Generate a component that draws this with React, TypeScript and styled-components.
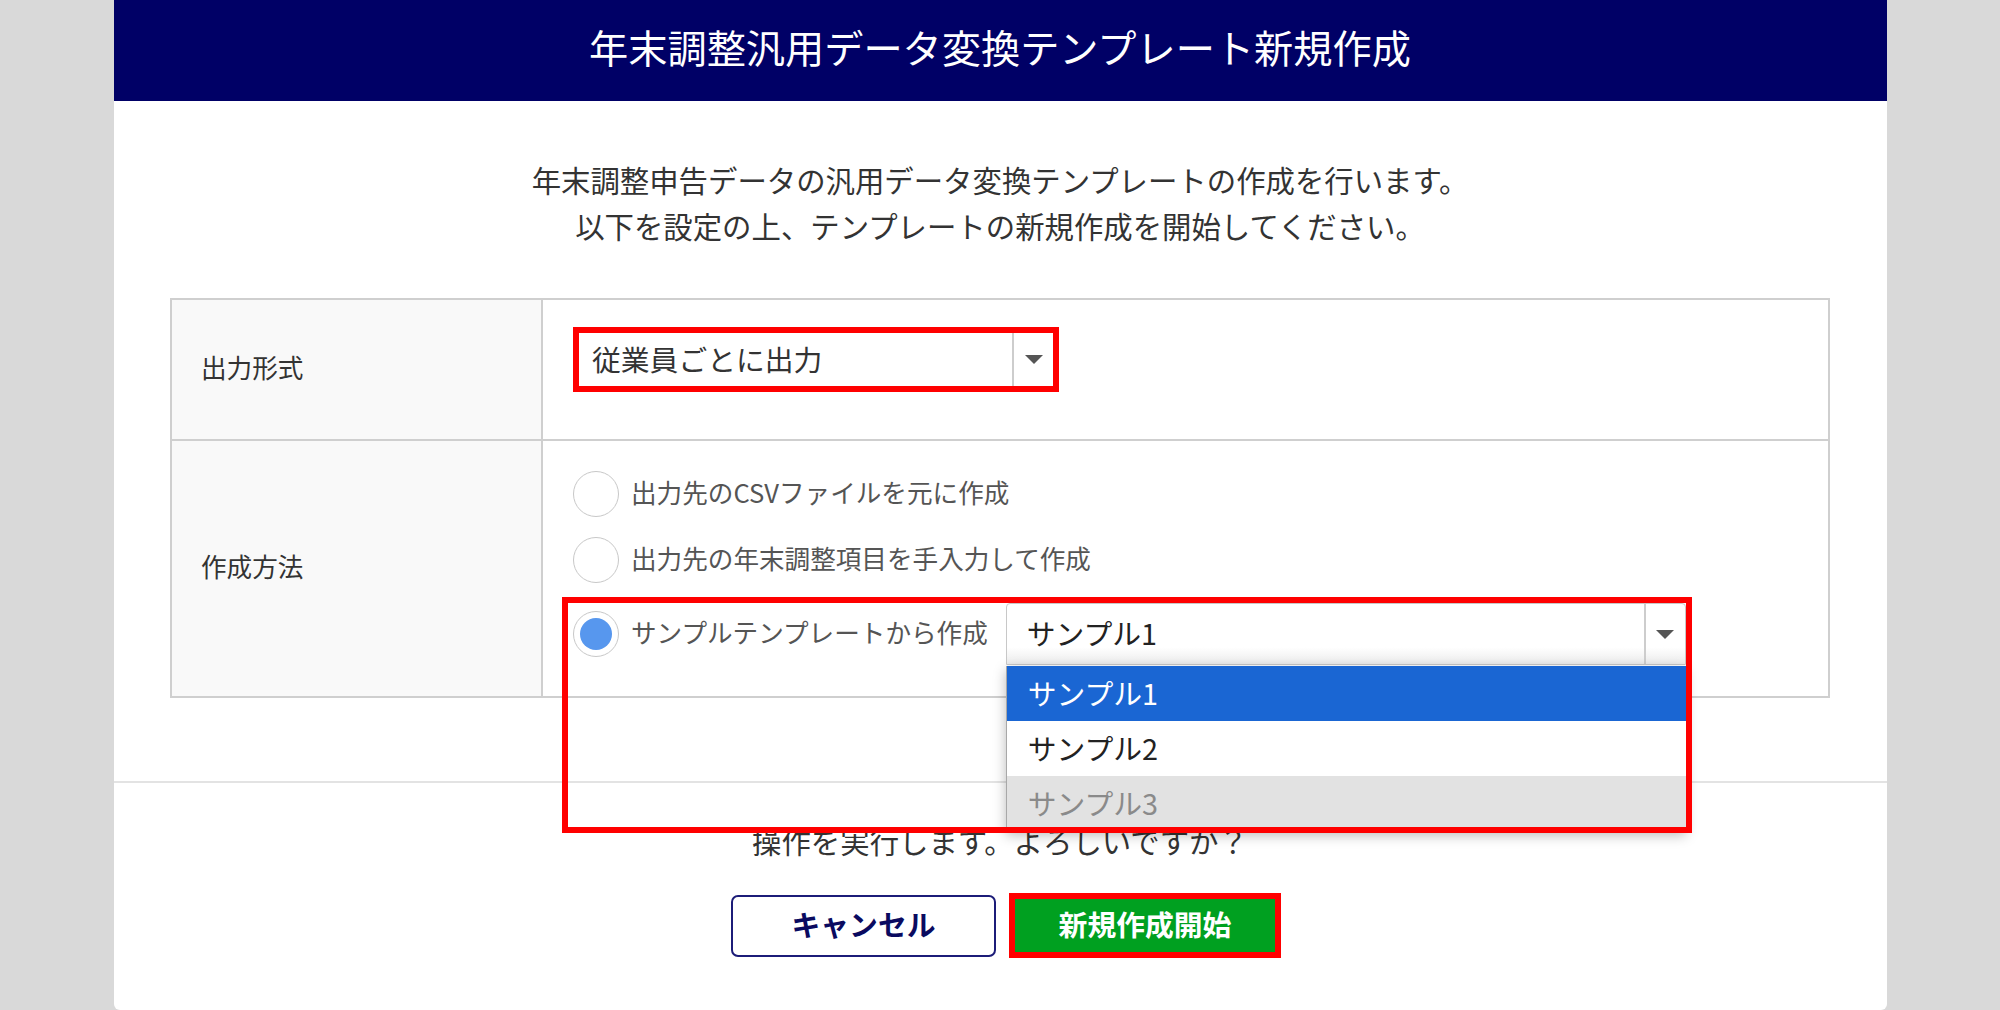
import React from "react";
import styled, { createGlobalStyle } from "styled-components";

const GlobalStyle = createGlobalStyle`
  html, body {
    margin: 0;
    padding: 0;
    background: #d9d9d9;
  }
  body {
    font-family: "Noto Sans CJK JP", "Noto Sans", "Liberation Sans", sans-serif;
    color: #333;
  }
  * { box-sizing: border-box; }
`;

const Page = styled.div`
  display: flex;
  justify-content: center;
  min-height: 1010px;
`;

const Panel = styled.div`
  width: 1773px;
  background: #fff;
  border-radius: 0 0 6px 6px;
  display: flex;
  flex-direction: column;
`;

const Header = styled.header`
  height: 101px;
  background: #000066;
  color: #fff;
  display: flex;
  align-items: center;
  justify-content: center;
  padding-bottom: 8px;
  font-size: 39.2px;
  line-height: 1.2;
`;

const Lead = styled.div`
  padding-top: 55px;
  text-align: center;
  font-size: 29.4px;
  line-height: 46px;
  color: #333;
`;

const Table = styled.div`
  margin: 50px 56.5px 0;
  border: 2px solid #cfcfcf;
  border-bottom: none;
`;

const Row = styled.div`
  display: grid;
  grid-template-columns: 371px 1fr;
  border-bottom: 2px solid #cfcfcf;
`;

const LabelCell = styled.div`
  background: #f9f9f9;
  border-right: 2px solid #cfcfcf;
  display: flex;
  align-items: center;
  padding: 0 0 6px 29px;
  font-size: 25.6px;
  color: #333;
`;

const ValueCell = styled.div<{ $pad: string }>`
  padding: ${(p) => p.$pad};
  display: flex;
  flex-direction: column;
  align-items: flex-start;
  gap: 20px;
`;

const SelectBox = styled.div<{ $variant: "framed" | "plain" }>`
  position: relative;
  display: flex;
  align-items: stretch;
  background: ${(p) =>
    p.$variant === "plain" ? "linear-gradient(#ffffff 72%, #ececec)" : "#fff"};
  border: ${(p) => (p.$variant === "framed" ? "6px solid #ff0000" : "1px solid #c8c8c8")};
  border-radius: ${(p) => (p.$variant === "plain" ? "4px 4px 0 0" : "0")};
  width: ${(p) => (p.$variant === "framed" ? "486px" : "680px")};
  height: ${(p) => (p.$variant === "framed" ? "65px" : "62px")};
  font-size: 28.8px;
  color: ${(p) => (p.$variant === "framed" ? "#333" : "#222")};
`;

const SelectValue = styled.div<{ $pad: number }>`
  flex: 1;
  display: flex;
  align-items: center;
  padding-left: ${(p) => p.$pad}px;
  padding-bottom: 3px;
  white-space: nowrap;
`;

const ArrowZone = styled.div`
  width: 41px;
  border-left: 2px solid #cdcdcd;
  display: flex;
  align-items: center;
  justify-content: center;
`;

const Arrow = styled.span`
  width: 0;
  height: 0;
  border-left: 9.5px solid transparent;
  border-right: 9.5px solid transparent;
  border-top: 9.5px solid #555;
`;

const RadioItem = styled.label`
  position: relative;
  display: flex;
  align-items: center;
  gap: 12px;
  font-size: 25.6px;
  color: #555;
  white-space: nowrap;
`;

const RadioText = styled.span`
  padding-bottom: 5px;
`;

const RadioCircle = styled.span<{ $checked?: boolean }>`
  width: 46px;
  height: 46px;
  border-radius: 50%;
  border: 1.5px solid #c8c8c8;
  background: #fff;
  display: flex;
  align-items: center;
  justify-content: center;
  flex: none;
  &::after {
    content: "";
    width: 32px;
    height: 32px;
    border-radius: 50%;
    background: ${(p) => (p.$checked ? "#5797ee" : "transparent")};
  }
`;

const InlineSelect = styled.div`
  position: relative;
  margin-left: 6px;
`;

const OptionList = styled.ul`
  position: absolute;
  top: 100%;
  left: 0;
  width: 680px;
  margin: 1px 0 0;
  padding: 0;
  list-style: none;
  border-left: 1px solid #a8a8a8;
  box-shadow: 0 4px 12px rgba(0, 0, 0, 0.28);
  z-index: 2;
`;

const Option = styled.li<{ $state: "active" | "normal" | "disabled" }>`
  height: 55px;
  display: flex;
  align-items: center;
  padding: 0 0 3px 21px;
  font-size: 28.8px;
  background: ${(p) =>
    p.$state === "active" ? "#1a66d3" : p.$state === "disabled" ? "#e2e2e2" : "#fff"};
  color: ${(p) =>
    p.$state === "active" ? "#fff" : p.$state === "disabled" ? "#8a8a8a" : "#222"};
`;

const RedFrame = styled.div`
  position: absolute;
  left: -11px;
  top: -6px;
  width: 1130px;
  height: 236px;
  border: 6px solid #ff0000;
  pointer-events: none;
  z-index: 3;
`;

const Footer = styled.div`
  margin-top: 82.5px;
  border-top: 2px solid #e3e3e3;
  padding: 34px 0 50px;
  display: flex;
  flex-direction: column;
  align-items: center;
`;

const Confirm = styled.p`
  margin: 0;
  font-size: 29.4px;
  line-height: 46px;
  color: #333;
`;

const ButtonRow = styled.div`
  margin-top: 30.5px;
  padding-left: 12px;
  display: flex;
  align-items: center;
  gap: 13px;
`;

const Button = styled.button<{ $kind: "cancel" | "primary" }>`
  font-family: inherit;
  font-weight: 700;
  font-size: 28.8px;
  cursor: pointer;
  display: flex;
  align-items: center;
  justify-content: center;
  padding: 0 0 4px;
  width: ${(p) => (p.$kind === "cancel" ? "265px" : "272px")};
  height: ${(p) => (p.$kind === "cancel" ? "62px" : "65px")};
  border-radius: ${(p) => (p.$kind === "cancel" ? "7px" : "0")};
  border: ${(p) => (p.$kind === "cancel" ? "2px solid #1c1c78" : "6px solid #ff0000")};
  background: ${(p) => (p.$kind === "cancel" ? "#fff" : "#00a020")};
  color: ${(p) => (p.$kind === "cancel" ? "#0a0a60" : "#fff")};
`;

export default function App() {
  return (
    <>
      <GlobalStyle />
      <Page>
        <Panel>
          <Header>年末調整汎用データ変換テンプレート新規作成</Header>
          <Lead>
            年末調整申告データの汎用データ変換テンプレートの作成を行います。
            <br />
            以下を設定の上、テンプレートの新規作成を開始してください。
          </Lead>
          <Table>
            <Row>
              <LabelCell>出力形式</LabelCell>
              <ValueCell $pad="27px 30px 47px 30px">
                <SelectBox $variant="framed">
                  <SelectValue $pad={13}>従業員ごとに出力</SelectValue>
                  <ArrowZone>
                    <Arrow />
                  </ArrowZone>
                </SelectBox>
              </ValueCell>
            </Row>
            <Row>
              <LabelCell>作成方法</LabelCell>
              <ValueCell $pad="30px 30px 31px 30px">
                <RadioItem>
                  <RadioCircle />
                  <RadioText>出力先のCSVファイルを元に作成</RadioText>
                </RadioItem>
                <RadioItem>
                  <RadioCircle />
                  <RadioText>出力先の年末調整項目を手入力して作成</RadioText>
                </RadioItem>
                <RadioItem>
                  <RadioCircle $checked />
                  <RadioText>サンプルテンプレートから作成</RadioText>
                  <InlineSelect>
                    <SelectBox $variant="plain">
                      <SelectValue $pad={20}>サンプル1</SelectValue>
                      <ArrowZone>
                        <Arrow />
                      </ArrowZone>
                    </SelectBox>
                    <OptionList>
                      <Option $state="active">サンプル1</Option>
                      <Option $state="normal">サンプル2</Option>
                      <Option $state="disabled">サンプル3</Option>
                    </OptionList>
                  </InlineSelect>
                  <RedFrame />
                </RadioItem>
              </ValueCell>
            </Row>
          </Table>
          <Footer>
            <Confirm>操作を実行します。よろしいですか？</Confirm>
            <ButtonRow>
              <Button $kind="cancel">キャンセル</Button>
              <Button $kind="primary">新規作成開始</Button>
            </ButtonRow>
          </Footer>
        </Panel>
      </Page>
    </>
  );
}
